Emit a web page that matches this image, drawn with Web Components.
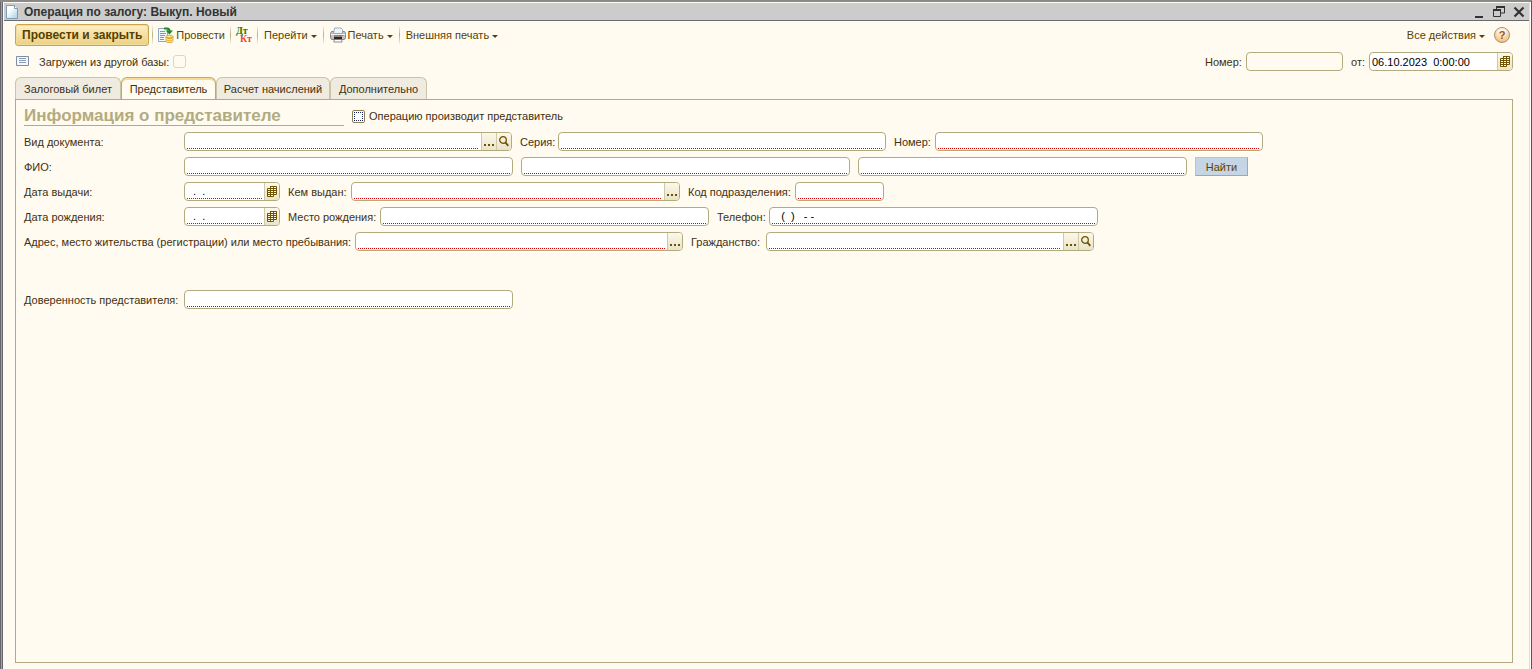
<!DOCTYPE html>
<html lang="ru">
<head>
<meta charset="utf-8">
<title>Операция по залогу: Выкуп. Новый</title>
<style>
  html, body { margin: 0; }
  body { font: 11px/14px "Liberation Sans", Arial, sans-serif; color: #3f3010; background: #fffbf0; }
</style>
</head>
<body>
<pawn-window></pawn-window>
<script>
const ICONS = {
  page: '<svg width="16" height="16" viewBox="0 0 16 16"><defs><linearGradient id="g" x2="1" y2="1"><stop offset=".3" stop-color="#fff"/><stop offset="1" stop-color="#a9cfe6"/></linearGradient></defs><path d="M2.5 1.5h8l3 3v10h-11z" fill="url(#g)" stroke="#7b9db5"/><path d="M10.5 1.5v3h3" fill="#fff" stroke="#7b9db5"/></svg>',
  post: '<svg width="16" height="16" viewBox="0 0 16 16"><path d="M.5 1.500h9v13h-9z" fill="#f2f8fc" stroke="#8fa8bc"/><path d="M2 4.500h5M2 6.500h6M2 8.500h5M2 10.500h4M2 12.500h4" stroke="#6f9cc0"/><path d="M6 1.500h3q2.500 0 2.500 2.500" fill="none" stroke="#1f8a2a" stroke-width="2"/><path d="M7.500 3.500h7.500L11.500 7.500z" fill="#1f8a2a"/><path d="M8 9.500v4.500c0 2.300 7 2.300 7 0V9.500z" fill="#efb62a" stroke="#b5800f" stroke-width=".6"/><ellipse cx="11.500" cy="9.500" rx="3.500" ry="1.400" fill="#ffe88a" stroke="#b5800f" stroke-width=".6"/><path d="M8 11.300c0 1.800 7 1.800 7 0M8 13.300c0 1.800 7 1.800 7 0" fill="none" stroke="#fff0a8"/></svg>',
  printer: '<svg width="16" height="16" viewBox="0 0 16 16"><path d="M1.500 4.500h13q1 1 1 3v3q0 1.500-1.500 2H2q-1.500-.5-1.500-2v-3q0-2 1-3z" fill="#c6c2bf" stroke="#8a827d"/><path d="M3.500 6.500L4.500 1h6.500l1.500 1.500v4z" fill="#eef6fb" stroke="#7f9db3" stroke-width=".8"/><path d="M1 7.500h14" stroke="#f7f5f3"/><path d="M4 8h8v3H4z" fill="#8f8782"/><path d="M4 10h8v2.500H4z" fill="#2e2724"/><path d="M4.500 12.500h7l.7 2.500H3.800z" fill="#fff" stroke="#77716d" stroke-width=".8"/><path d="M9 8.500h2" stroke="#e64b2c"/><path d="M11.500 8.500h2" stroke="#45b942"/></svg>',
  list: '<svg width="13" height="11" viewBox="0 0 13 11"><path d="M.5.5h12v9H.5z" fill="#f5f8fb" stroke="#7c8ea6"/><path d="M3 2.500h7M3 4.500h7M3 6.500h7" stroke="#8c9cb4"/></svg>',
  calendar: '<svg width="10" height="11" viewBox="0 0 10 11"><path d="M3.500.5h6v8h-6z" fill="#fffbe4" stroke="#6e5300"/><path d="M.5 2.500h6v8h-6z" fill="#fffbe4" stroke="#6e5300"/><path d="M3.500 0v10M6.500 0v10M0 4.500h10M0 6.500h10M0 8.500h9M3 2.500h7" stroke="#6e5300"/></svg>',
  loupe: '<svg width="10" height="11" viewBox="0 0 10 11"><circle cx="4" cy="4" r="3.300" fill="none" stroke="#6e5300" stroke-width="1.300"/><path d="M6.300 6.300l3 3.500" stroke="#6e5300" stroke-width="1.800"/></svg>',
  dots: '<svg width="10" height="11" viewBox="0 0 10 11"><path d="M0 8h2v2H0zM4 8h2v2H4zM8 8h2v2H8z" fill="#6e5300"/></svg>',
  min: '<svg width="12" height="12" viewBox="0 0 12 12"><path d="M2 10h8v2H2z" fill="#333"/></svg>',
  restore: '<svg width="12" height="12" viewBox="0 0 12 12"><path d="M3.500 4V1h8v6H8M.5 4.500h7v6h-7z" fill="none" stroke="#333"/><path d="M3 1h9M0 4h8" stroke="#333" stroke-width="2"/></svg>',
  close: '<svg width="12" height="12" viewBox="0 0 12 12"><path d="M1.500 1.500l9 9M10.500 1.500l-9 9" stroke="#333" stroke-width="2.200"/></svg>'
};

const define = (name, render) => customElements.define(name, class extends HTMLElement {
  connectedCallback() {
    if (this.shadowRoot) return;
    this.attachShadow({ mode: 'open', delegatesFocus: true }).innerHTML = render(this);
  }
});

define('pawn-icon', el => `<style>:host{display:inline-flex;flex:none}svg{display:block}</style>${ICONS[el.getAttribute('name')]}`);

define('title-bar', () => `<style>
  :host{display:flex;align-items:center;gap:4px;height:17px;padding:0 4px 0 0;background:#ccc;border-bottom:1px solid #6b6b6b}
  h1{flex:1;margin:0;font-size:12px;line-height:16px;color:#333}
  .buttons{display:flex;gap:8px}
  button{display:flex;padding:0;border:0;background:none}
</style>
<pawn-icon name="page"></pawn-icon><h1><slot></slot></h1>
<div class="buttons">
  <button aria-label="Свернуть"><pawn-icon name="min"></pawn-icon></button>
  <button aria-label="Развернуть"><pawn-icon name="restore"></pawn-icon></button>
  <button aria-label="Закрыть"><pawn-icon name="close"></pawn-icon></button>
</div>`);

define('tool-button', el => `<style>
  :host{display:inline-flex;flex:none}
  button{display:flex;align-items:center;gap:2px;height:22px;padding:0;border:0;background:none;font:inherit;color:#5a4300;white-space:nowrap}
  :host([menu]) button{padding:0 1px}
  :host([primary]){margin-right:-2px}
  :host([primary]) button{box-sizing:border-box;padding:0 6px;font-weight:bold;font-size:12px;border:1px solid #c9a44c;border-radius:3px;background:linear-gradient(#fdf0c4,#ecd083);box-shadow:inset 0 0 0 1px #f3dc9b;color:#573f00}
  .arrow{width:0;height:0;margin:3px 0 0 1px;border:3px solid transparent;border-top-color:#5a4300;border-bottom:0}
</style>
<button>${el.getAttribute('icon') ? `<pawn-icon name="${el.getAttribute('icon')}"></pawn-icon>` : ''}<slot></slot>${el.hasAttribute('menu') ? '<span class="arrow"></span>' : ''}</button>`);

define('tool-separator', () => `<style>:host{display:block;flex:none;width:1px;height:20px;background:linear-gradient(#fffbf0,#b5ad84,#fffbf0)}</style>`);

define('entries-button', () => `<style>
  :host{display:inline-flex;flex:none}
  button{display:block;width:16px;height:16px;padding:0;border:0;background:none;font:bold 10px/8px "Liberation Serif",serif;text-align:left}
  span{display:block}
  .dt{color:#1f7a00}.kt{color:#f24040;text-align:right}
</style><button aria-label="Проводки"><span class="dt">Дт</span><span class="kt">Кт</span></button>`);

define('help-button', () => `<style>
  :host{display:inline-flex;flex:none;margin:0 3px}
  button{width:16px;height:16px;padding:0;border:1px solid #a58f7d;border-radius:50%;background:radial-gradient(circle at 50% 20%,#fff4e2 20%,#f7b255);font:bold 11px/14px "Liberation Sans",sans-serif;color:#8a5a35}
</style><button>?</button>`);

define('form-field', el => {
  const kinds = (el.getAttribute('buttons') || '').split(' ').filter(Boolean);
  const names = { dots: 'Выбрать', loupe: 'Открыть', calendar: 'Календарь' };
  return `<style>
  :host{display:flex;align-items:center;flex:none}
  label{flex:none;width:var(--label,auto);white-space:nowrap}
  .box{display:flex;box-sizing:border-box;width:var(--box,329px);height:19px;border:1px solid #b3ab80;border-radius:4px;background:#fff;overflow:hidden}
  .edit{flex:1;display:flex;min-width:0;padding:0 2px;flex-direction:column}
  input{flex:1;min-width:0;min-height:0;width:100%;box-sizing:border-box;padding:0;border:0;outline:0;background:none;font:inherit;color:#000;white-space:pre}
  .edit::after{content:"";height:1px;margin-bottom:1px;background:repeating-linear-gradient(90deg,#e00000 0 1px,transparent 1px 2px)}
  :host([plain]) .edit::after{display:none}
  :host([disabled]) .box{background:#fffbf0}
  button{box-sizing:border-box;width:15px;flex:none;display:flex;align-items:center;justify-content:center;padding:0;border:0;border-left:1px solid #cfc9a6;background:linear-gradient(#fbf8ea,#e9e4c8)}
  </style>
  ${el.hasAttribute('label') ? `<label for="i">${el.getAttribute('label')}</label>` : ''}
  <div class="box"><div class="edit"><input id="i" type="text" ${el.hasAttribute('label') ? '' : `aria-label="${el.getAttribute('hint')}"`} value="${el.getAttribute('value') || ''}" ${el.hasAttribute('disabled') ? 'disabled' : ''}></div>${kinds.map(k => `<button aria-label="${names[k]}"><pawn-icon name="${k}"></pawn-icon></button>`).join('')}</div>`;
});

define('check-box', el => `<style>
  :host{display:inline-flex;flex:none}
  label{display:flex;align-items:center;gap:4px;white-space:nowrap}
  :host([before]) label{flex-direction:row-reverse}
  input{appearance:none;box-sizing:border-box;width:13px;height:13px;margin:0;border:1px solid #b3ab80;border-radius:3px;background:#fff}
  :host([marked]) input{border-color:#8a8052;border-radius:2px;outline:1px dotted #102060;outline-offset:-3px}
  :host([disabled]) input{border-color:#dcd6bd;background:#fffbf0}
</style><label><input type="checkbox" ${el.hasAttribute('disabled') ? 'disabled' : ''}><slot></slot></label>`);

define('tab-item', () => `<style>
  :host{display:flex;flex:none}
  button{box-sizing:border-box;width:var(--tab);height:23px;padding:0;border:1px solid #cbc5a4;border-bottom-color:#b3ab80;border-radius:6px 6px 0 0;background:#efebe1;font:inherit;color:#3f3010;white-space:nowrap}
  :host([selected]) button{border-color:#b3ab80;border-bottom-color:#fffbf0;background:#fffbf0;box-shadow:inset 0 2px #fbd98f}
</style><button role="tab"><slot></slot></button>`);

define('form-row', () => `<style>:host{display:flex;align-items:center;gap:8px;height:19px;margin-bottom:6px}</style><slot></slot>`);

define('find-button', () => `<style>
  :host{display:inline-flex;flex:none}
  button{box-sizing:border-box;width:53px;height:19px;padding:0;border:1px solid;border-color:#b3c5da #a9a98f #a9a98f #b3c5da;background:#c6d5e5;font:inherit;color:#5a4300}
</style><button><slot></slot></button>`);

define('representative-panel', () => `<style>
  :host{display:block;flex:1;box-sizing:border-box;border:1px solid #b3ab80;margin-top:-1px;padding:6px 8px}
  .head{display:flex;align-items:center;gap:8px;height:20px;margin-bottom:6px}
  h2{box-sizing:border-box;width:320px;height:20px;margin:0;border-bottom:1px solid #b3ab80;font-size:17px;line-height:19px;color:#b3ab80}
  .gap{margin-top:39px}
</style>
<div class="head"><h2>Информация о представителе</h2><check-box marked>Операцию производит представитель</check-box></div>
<form-row>
  <form-field label="Вид документа:" buttons="dots loupe" style="--label:160px;--box:328px"></form-field>
  <form-field label="Серия:" style="--label:38px;--box:328px"></form-field>
  <form-field label="Номер:" style="--label:41px;--box:328px"></form-field>
</form-row>
<form-row>
  <form-field label="ФИО:" style="--label:160px"></form-field>
  <form-field hint="Имя"></form-field>
  <form-field hint="Отчество"></form-field>
  <find-button>Найти</find-button>
</form-row>
<form-row>
  <form-field label="Дата выдачи:" value="  .  ." buttons="calendar" style="--label:160px;--box:96px"></form-field>
  <form-field label="Кем выдан:" buttons="dots" style="--label:63px"></form-field>
  <form-field label="Код подразделения:" style="--label:107px;--box:89px"></form-field>
</form-row>
<form-row>
  <form-field label="Дата рождения:" value="  .  ." buttons="calendar" style="--label:160px;--box:96px"></form-field>
  <form-field label="Место рождения:" style="--label:92px"></form-field>
  <form-field label="Телефон:" value="   (  )   - -" style="--label:52px"></form-field>
</form-row>
<form-row>
  <form-field label="Адрес, место жительства (регистрации) или место пребывания:" buttons="dots" style="--label:331px;--box:328px"></form-field>
  <form-field label="Гражданство:" buttons="dots loupe" style="--label:75px;--box:328px"></form-field>
</form-row>
<form-row class="gap">
  <form-field label="Доверенность представителя:" style="--label:160px"></form-field>
</form-row>`);

define('pawn-window', () => `<style>
  :host{display:flex;flex-direction:column;box-sizing:border-box;min-height:100vh;border-top:2px solid #8a8a8a;border-right:1px solid #50545c;padding:1px 2px 0 4px;box-shadow:inset -1px 0 #fff,inset -2px 0 #ddd;background:linear-gradient(90deg,#66666c 1px,#a0a0a4 1px 2px,#66666c 2px 3px,#fffbf0 3px)}
  .content{flex:1;display:flex;flex-direction:column;padding:3px 16px 6px 11px}
  .bar{display:flex;align-items:center;gap:5px;height:22px}
  .fill{flex:1}
  .info{display:flex;align-items:center;height:19px;margin:6px 0;padding-left:1px;gap:8px}
  .info pawn-icon{margin-right:2px}
  .tabs{display:flex}
</style>
<title-bar>Операция по залогу: Выкуп. Новый</title-bar>
<div class="content">
  <div class="bar">
    <tool-button primary>Провести и закрыть</tool-button>
    <tool-separator></tool-separator>
    <tool-button icon="post">Провести</tool-button>
    <tool-separator></tool-separator>
    <entries-button></entries-button>
    <tool-separator></tool-separator>
    <tool-button menu>Перейти</tool-button>
    <tool-separator></tool-separator>
    <tool-button icon="printer" menu>Печать</tool-button>
    <tool-separator></tool-separator>
    <tool-button menu>Внешняя печать</tool-button>
    <span class="fill"></span>
    <tool-button menu>Все действия</tool-button>
    <help-button></help-button>
  </div>
  <div class="info">
    <pawn-icon name="list"></pawn-icon>
    <check-box before disabled>Загружен из другой базы:</check-box>
    <span class="fill"></span>
    <form-field label="Номер:" plain disabled style="--label:41px;--box:97px"></form-field>
    <form-field label="от:" plain value="06.10.2023  0:00:00" buttons="calendar" style="--label:18px;--box:144px"></form-field>
  </div>
  <div class="tabs" role="tablist">
    <tab-item style="--tab:106px">Залоговый билет</tab-item>
    <tab-item selected style="--tab:95px">Представитель</tab-item>
    <tab-item style="--tab:114px">Расчет начислений</tab-item>
    <tab-item style="--tab:97px">Дополнительно</tab-item>
  </div>
  <representative-panel></representative-panel>
</div>`);
</script>
</body>
</html>
